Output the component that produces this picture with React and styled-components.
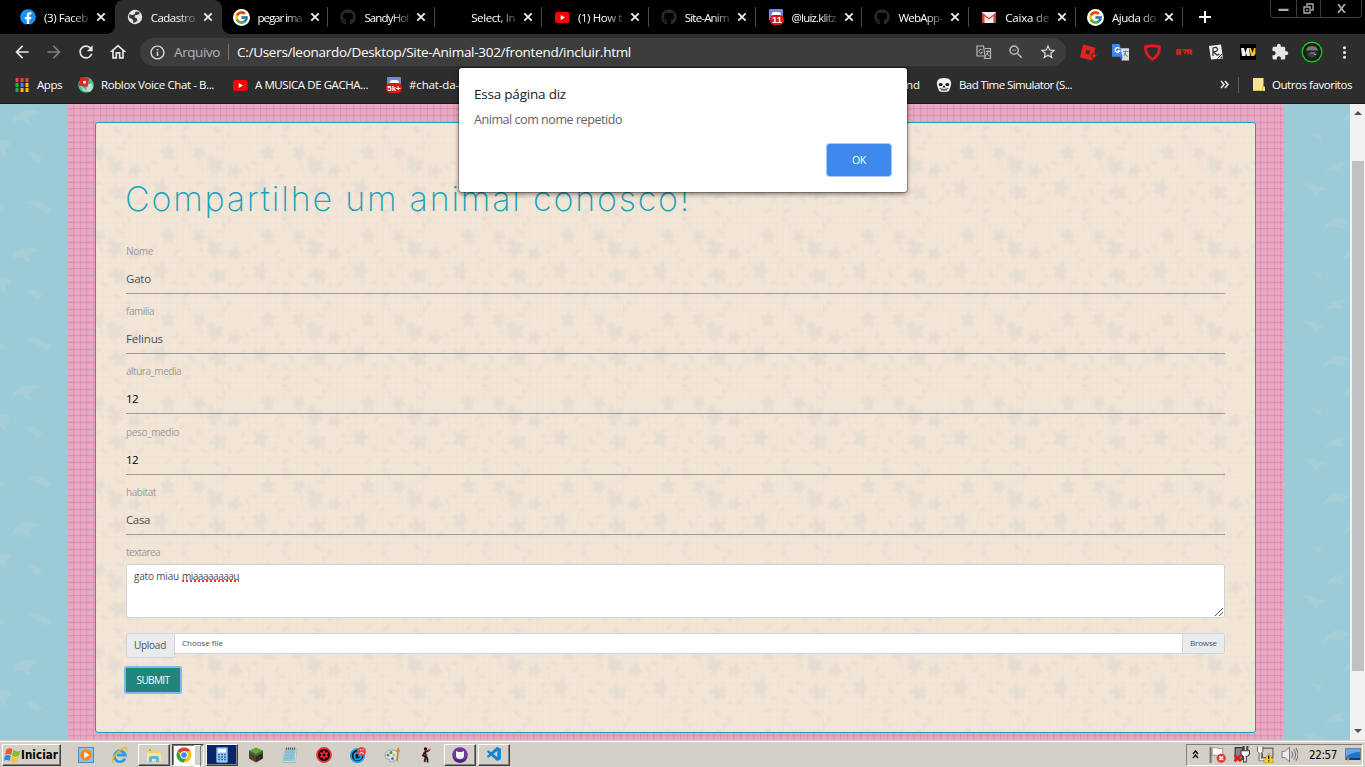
import React, { useLayoutEffect, useRef, useState } from "react";
import styled, { createGlobalStyle, css } from "styled-components";
import { FaFacebook, FaGithub } from "react-icons/fa";
import { FcGoogle } from "react-icons/fc";
import { VscVscode } from "react-icons/vsc";
import {
  MdArrowBack, MdArrowForward, MdRefresh, MdOutlineHome, MdInfoOutline,
  MdStarBorder, MdZoomOut, MdExtension, MdMoreVert,
} from "react-icons/md";

const Global = createGlobalStyle`
  * { box-sizing: border-box; }
  body { margin: 0; overflow: hidden; font-family: "Open Sans", "Noto Sans", sans-serif; }
  svg { display: block; flex: none; }
`;

/* ---------- text fitted to a column width by tracking ---------- */
const TextSpan = styled.span`
  display: block;
  width: max-content;
  flex: none;
  white-space: pre;
  font-size: ${(p) => p.$size}px;
  line-height: ${(p) => Math.ceil(p.$size * 1.4)}px;
  color: ${(p) => p.$color || "inherit"};
  ${(p) => p.$misspelt && css`
    text-decoration: underline dotted #f33 2px;
    text-decoration-skip-ink: none;
    text-underline-offset: 1px;
  `}
`;
function Text({ w, size = 12, color, misspelt, children }) {
  const ref = useRef(null);
  const [spacing, setSpacing] = useState(0);
  useLayoutEffect(() => {
    const natural = ref.current.getBoundingClientRect().width;
    setSpacing((w - natural) / children.length);
  }, [w, children]);
  return (
    <TextSpan ref={ref} $size={size} $color={color} $misspelt={misspelt} style={{ letterSpacing: spacing }}>
      {children}
    </TextSpan>
  );
}

/* ---------- frame ---------- */
const Screen = styled.div`
  position: relative;
  width: 1365px;
  height: 767px;
  display: flex;
  flex-direction: column;
  overflow: hidden;
  background: #2d2d2d;
`;

/* ---------- tab strip ---------- */
const TabStrip = styled.div`
  height: 34px;
  flex: none;
  display: flex;
  padding-left: 8px;
  background: #000;
`;
const TabItem = styled.div`
  position: relative;
  width: 106.8px;
  height: 34px;
  flex: none;
  display: flex;
  align-items: center;
  padding-left: 12px;
  color: #fff;
  background: ${(p) => (p.$active ? "#2d2d2d" : "transparent")};
  border-radius: 8px 8px 0 0;
  &::after {
    content: "";
    display: ${(p) => (p.$divider ? "block" : "none")};
    position: absolute;
    right: 0;
    top: 7px;
    width: 1px;
    height: 20px;
    background: #4a4a4a;
  }
`;
const TabFoot = styled.i`
  position: absolute;
  bottom: 0;
  ${(p) => p.$side}: -8px;
  width: 8px;
  height: 8px;
  background: radial-gradient(circle at ${(p) => (p.$side === "left" ? "0 0" : "100% 0")}, transparent 7.5px, #2d2d2d 8px);
`;
const IconSlot = styled.div`
  width: ${(p) => p.$w || 16}px;
  height: ${(p) => p.$h || 16}px;
  flex: none;
  display: flex;
  align-items: center;
  justify-content: center;
  color: #e4e4e4;
`;
const TabTitle = styled.div`
  width: 45px;
  margin: 0 7px 0 8px;
  mask-image: linear-gradient(90deg, #000 60%, rgba(0, 0, 0, 0.2) 100%);
`;
const NewTab = styled.div`
  width: 44px;
  display: flex;
  align-items: center;
  justify-content: center;
`;
const WindowButtons = styled.div`
  display: flex;
  width: 92px;
  height: 18px;
  margin-left: auto;
  margin-right: 3px;
  border: 1px solid #3d3d3d;
  border-top: 0;
  border-radius: 0 0 4px 4px;
`;
const WindowButton = styled.div`
  width: ${(p) => p.$w}px;
  display: flex;
  align-items: center;
  justify-content: center;
  & + & { border-left: 1px solid #3d3d3d; }
`;

/* ---------- navigation bar ---------- */
const NavBar = styled.div`
  height: 35px;
  flex: none;
  display: flex;
  align-items: center;
  padding: 1px 5px 0 6px;
`;
const NavButton = styled.div`
  width: 32px;
  height: 32px;
  display: flex;
  flex: none;
  align-items: center;
  justify-content: center;
  color: ${(p) => (p.$dim ? "#7c7c7c" : "#e6e6e6")};
`;
const AddressBar = styled.div`
  width: 926px;
  height: 28px;
  margin: 0 6px;
  display: flex;
  flex: none;
  align-items: center;
  padding: 0 2px 0 9px;
  border-radius: 14px;
  background: #3d3d3d;
  color: #fff;
`;
const AddressRule = styled.i`
  width: 1px;
  height: 16px;
  margin: 0 8px 0 8px;
  background: #777;
`;
const AddressActions = styled.div`
  display: flex;
  margin-left: auto;
`;
const Scheme = styled.div`
  display: flex;
  margin-left: 8px;
`;

/* ---------- bookmarks ---------- */
const BookmarkBar = styled.div`
  height: 35px;
  flex: none;
  display: flex;
  align-items: center;
  padding: 0 13px 3px 14px;
  color: #fff;
  border-bottom: 1px solid #1c1b1c;
`;
const Bookmark = styled.div`
  display: flex;
  align-items: center;
  gap: 7px;
  margin-right: ${(p) => p.$after}px;
`;
const Covered = styled.div`
  display: flex;
  justify-content: flex-end;
  width: 461px;
  margin-right: 16px;
`;
const BookmarkEnd = styled.div`
  margin-left: auto;
  display: flex;
  align-items: center;
`;
const BarRule = styled.i`
  width: 1px;
  height: 16px;
  margin: 0 12px 0 9px;
  background: #5a5a5a;
`;

/* ---------- web page ---------- */
const Viewport = styled.div`
  height: 636px;
  flex: none;
  display: flex;
`;
const Sky = styled.div`
  position: relative;
  width: ${(p) => p.$w}px;
  background: #9bcbd7;
`;
const Fill = styled.svg`
  position: absolute;
  inset: 0;
  width: 100%;
  height: 100%;
`;
const Gingham = styled.div`
  width: 1215px;
  padding: 18px 27px 0;
  background-color: #eba8c2;
  background-image:
    repeating-linear-gradient(180deg, transparent 0 3.6px, rgba(130, 70, 110, 0.05) 3.6px 4.4px, rgba(130, 70, 110, 0.18) 4.4px 5.4px, rgba(130, 70, 110, 0.04) 5.4px 6.67px),
    repeating-linear-gradient(90deg, transparent 0 5px, rgba(120, 60, 110, 0.13) 5px 6px, rgba(120, 60, 110, 0.03) 6px 6.67px);
`;
const Card = styled.div`
  position: relative;
  width: 1161px;
  height: 611px;
  border: 1px solid #17a2b8;
  border-radius: 3px;
  overflow: hidden;
  background: #f3e6d6;
`;
const Form = styled.div`
  position: relative;
  padding: 52px 30px 0;
  display: flex;
  flex-direction: column;
`;
const Title = styled.h1`
  margin: 0 0 0 -1px;
  height: 69px;
  font-family: Inter, "Open Sans", sans-serif;
  font-weight: 200;
  color: #17a2b8;
`;
const Field = styled.div`
  height: 60.2px;
  display: flex;
  flex-direction: column;
  gap: 12px;
`;
const FieldInput = styled.div`
  height: 24px;
  border-bottom: 1px solid #999b9c;
`;
const TextArea = styled.div`
  position: relative;
  height: 54px;
  margin-top: 5px;
  padding: 4px 7px;
  display: flex;
  align-items: flex-start;
  gap: 3px;
  border: 1px solid #ced4da;
  border-radius: 3px;
  background: #fff;
`;
const Grip = styled.svg`
  position: absolute;
  right: 1px;
  bottom: 1px;
`;
const UploadRow = styled.div`
  display: flex;
  align-items: flex-start;
  margin-top: 15px;
`;
const UploadTag = styled.div`
  width: 49px;
  height: 25px;
  display: flex;
  align-items: center;
  padding-left: 7px;
  border: 1px solid #ced4da;
  border-radius: 3px 0 0 3px;
  background: #e9ecef;
`;
const FileBox = styled.div`
  flex: 1;
  height: 21px;
  display: flex;
  align-items: center;
  justify-content: space-between;
  padding-left: 7px;
  border: 1px solid #ced4da;
  border-left: 0;
  border-radius: 0 3px 3px 0;
  background: #fff;
`;
const Browse = styled.div`
  width: 42px;
  height: 19px;
  display: flex;
  align-items: center;
  padding-left: 7px;
  border-left: 1px solid #ced4da;
  background: #e9ecef;
`;
const Submit = styled.div`
  width: 54px;
  height: 24px;
  margin: 10px 0 0;
  display: flex;
  align-items: center;
  justify-content: center;
  background: #20857a;
  border-radius: 1px;
  box-shadow: 0 0 0 2px #85b5ea;
`;
const ScrollBar = styled.div`
  width: 15px;
  display: flex;
  flex-direction: column;
  align-items: center;
  justify-content: space-between;
  padding: 7px 0 7px;
  background: #f1f1f1;
`;
const Thumb = styled.div`
  width: 12px;
  height: 510px;
  margin-top: -12px;
  margin-left: 1px;
  background: #c1c1c1;
`;

/* ---------- alert ---------- */
const Dialog = styled.div`
  position: absolute;
  left: 459px;
  top: 68px;
  width: 448px;
  height: 124px;
  display: flex;
  flex-direction: column;
  padding: 17px 16px 16px 15px;
  border-radius: 3px;
  background: #fff;
  box-shadow: 0 0 0 1px rgba(0, 0, 0, 0.25), 0 2px 5px rgba(0, 0, 0, 0.5);
`;
const DialogBody = styled.div`
  margin-top: 7px;
`;
const DialogButton = styled.div`
  width: 64px;
  height: 32px;
  margin-top: auto;
  align-self: flex-end;
  display: flex;
  align-items: center;
  justify-content: center;
  border-radius: 3px;
  background: #3f88ec;
  box-shadow: 0 0 0 1px #a5c8f7;
`;

/* ---------- taskbar ---------- */
const TaskBar = styled.div`
  height: 27px;
  flex: none;
  display: flex;
  align-items: center;
  padding: 2px 2px 0;
  background: #d4d0c8;
  box-shadow: inset 0 1px #d4d0c8, inset 0 2px #fff;
`;
const bevel = css`
  border: 1px solid;
  border-color: #fff #404040 #404040 #fff;
  box-shadow: inset -1px -1px #808080;
`;
const StartButton = styled.div`
  width: 59px;
  height: 22px;
  display: flex;
  align-items: center;
  padding: 1px 0 0 1px;
  font-family: "DejaVu Sans Condensed", "DejaVu Sans", sans-serif;
  font-weight: 700;
  ${bevel}
`;
const Tasks = styled.div`
  display: flex;
  margin-left: 9px;
`;
const TaskSlot = styled.div`
  position: relative;
  width: 32px;
  height: 22px;
  margin-right: 2px;
  display: flex;
  align-items: center;
  justify-content: center;
  ${(p) => p.$raised && bevel}
  ${(p) => p.$navy && css`background: #0a246a;`}
  ${(p) => p.$pressed && css`
    justify-content: flex-start;
    border: 1px solid;
    border-color: #404040 #fff #fff #404040;
    background: linear-gradient(90deg, #fff 0 21px, #d4d0c8 21px);
    box-shadow: inset 1px 1px #808080;
    padding-left: 3px;
    &::after {
      content: "";
      position: absolute;
      right: 2px;
      top: 0;
      width: 5px;
      height: 20px;
      border: 1px solid #fff;
      border-right-color: #808080;
    }
  `}
`;
const Tray = styled.div`
  width: 177px;
  height: 22px;
  margin-left: auto;
  display: flex;
  align-items: center;
  padding-left: 4px;
  border: 1px solid;
  border-color: #808080 #fff #fff #808080;
  font-family: "DejaVu Sans Condensed", sans-serif;
`;
const TrayIcon = styled.div`
  width: ${(p) => p.$w}px;
  display: flex;
  flex: none;
  justify-content: center;
`;
const Clock = styled.div`
  width: 50px;
  flex: none;
  padding: 1px 0 0 14px;
`;

/* ---------- drawings ---------- */
const Svg = ({ s = 16, w, h, v = "0 0 16 16", children }) => (
  <svg width={w || s} height={h || s} viewBox={v} fill="none">{children}</svg>
);
const Close = () => (
  <Svg s={10} v="0 0 10 10"><path d="M1.3 1.3L8.7 8.7M8.7 1.3L1.3 8.7" stroke="#f2f2f2" strokeWidth="1.8" /></Svg>
);
const YouTube = () => (
  <Svg><rect x="1" y="3" width="14.5" height="11" rx="2.5" fill="#f00" /><path d="M6.7 6v5l4.3-2.5z" fill="#fff" /></Svg>
);
const badgeFont = { fontFamily: "Liberation Sans, sans-serif", fontWeight: 700 };
const Discord = ({ label }) => (
  <Svg>
    <rect x="1" width="14" height="11" rx="1" fill="#7189d8" />
    <path d="M3.5 6Q4 3 6 3h4.500q2 0 2.500 3z" fill="#fff" />
    <rect x={label.length > 2 ? 0 : 2} y="6" width={label.length > 2 ? 16 : 14} height="10" rx="4.500" fill="#e01414" />
    <text x={label.length > 2 ? 8 : 9} y="14" fontSize={label.length > 2 ? 8 : 9.500} textAnchor="middle" fill="#fff" {...badgeFont}>{label}</text>
  </Svg>
);
const Globe = () => (
  <Svg><circle cx="8" cy="8" r="7.200" fill="#e4e4e4" /><path d="M2.500 5Q5 6.500 7 5.500t1-2.500q3-1.500 5 1-1.500 2.500-4 2-2 .5-1 2.500 2.500.5 2.500 2.500-1 2.500-4 3l-.5-3Q4 9 2 8.500z" fill="#3a3a3a" /></Svg>
);
const Gmail = () => (
  <Svg><rect x="1" y="3" width="14" height="11" fill="#eee" /><path d="M1 14V3.500L8 9l7-5.500V14h-2.500V7L8 10.500 3.500 7v7z" fill="#d93c30" /></Svg>
);
const Apps = () => (
  <Svg s={14} v="0 0 14 14">
    {["#e8453c", "#e8453c", "#e8453c", "#2fa653", "#3b83f3", "#f6b916", "#2fa653", "#f6b916", "#f6b916"].map((c, i) => (
      <rect key={i} x={(i % 3) * 5 + 0.5} y={Math.floor(i / 3) * 5} width="3" height="4" fill={c} />
    ))}
  </Svg>
);
const RobloxBall = () => (
  <Svg>
    <circle cx="8" cy="8" r="7.800" fill="#55b780" /><path d="M9 8l5-2 1 5-3 4-4-1z" fill="#b9dfd0" />
    <path d="M2 8l5 4 2 3-4-1z" fill="#9bd3e8" /><path d="M2.500 0L11 1.500 9.500 10 1 8.500z" fill="#dc2620" /><path d="M5.500 3.800l2.600.5-.5 2.500-2.600-.5z" fill="#fff" />
  </Svg>
);
const Skull = () => (
  <Svg>
    <path d="M3 2Q8 0 13 2q3 2.500 2 6l-1 3-1 3-3 1H6l-3-1-1-3-1-3Q0 4.500 3 2z" fill="#f2f2f2" />
    <ellipse cx="4.700" cy="7.600" rx="2" ry="1.700" fill="#1c1c1c" /><ellipse cx="11.300" cy="7.600" rx="2" ry="1.700" fill="#1c1c1c" />
    <path d="M7 10.300l1-1.500 1 1.500zM3.500 11.500q4.500 2 9 0M6 12v2M8 12.500v2M10 12v2" stroke="#222" strokeWidth=".8" />
  </Svg>
);
const Folder = () => (
  <Svg w={13} h={15} v="0 0 13 15"><path d="M1 1h10.500v9H13v4H1z" fill="#fde293" /><path d="M1 13.500h11.500M10.500 14v-4H13" stroke="#e5bd3d" /></Svg>
);
const TranslateGrey = () => (
  <Svg>
    <path d="M1 2h6.500L9 12H1zM9 4.500h5.500v10H8.500l1-2.500" stroke="#b8b8b8" strokeWidth="1.200" />
    <path d="M6.500 6A2 2 0 1 0 6.500 8.500H5M10 7.500h4M12 6v1.500q-.5 3-2 4M10.700 9l3 3.500" stroke="#b8b8b8" />
  </Svg>
);
const TranslateBlue = () => (
  <Svg s={17}>
    <path d="M7 4h9v11.500H9z" fill="#ddd" /><path d="M0 0h7l3 12H0z" fill="#4387f2" /><path d="M7 12h3l-1 3.500z" fill="#2b5cb8" />
    <path d="M7 4.300A2.200 2.200 0 1 0 7.200 6.500H5" stroke="#fff" strokeWidth="1.200" /><path d="M10.500 7h5M13 6v1q-.5 3-2 4M11.700 8.500l3 3.500" stroke="#6c8799" />
  </Svg>
);
const RobloxPlus = () => (
  <Svg s={17}><path d="M3 .5l11.500 3-1 4-1 6-2 2L0 12.500z" fill="#e2231a" /><path d="M6 5.500l3.500.8-.8 3.500-3.500-.8z" fill="#2d2d2d" /><path d="M13 8.500v5M10.500 11h5.500" stroke="#2d2d2d" strokeWidth="3" /><path d="M13 9v4M11 11h4.500" stroke="#e2231a" strokeWidth="1.700" /></Svg>
);
const Shield = () => (
  <Svg s={17}><path d="M1.500 2.500Q5 2 8 1.500q3 .5 6.500 1 .5 8-6.500 12Q1 10.500 1.500 2.500z" stroke="#eb1626" strokeWidth="2.600" /></Svg>
);
const Btr = () => (
  <Svg w={17} h={6} v="0 0 17 6"><path d="M1 1h3.500v4H1zM1 3h3.500M6.500 1h4L8.500 5M12 5.500V1h3.500v2H12M13.500 3.500l2.500 2" stroke="#df2819" strokeWidth="1.500" /></Svg>
);
const WhiteTile = () => (
  <Svg><path d="M1 2l12-1.500 2 14L3 15.500z" fill="#f2f2f2" /><path d="M5 12V4q4-1.500 4.500 1T5.500 8l4 3.500" stroke="#333" strokeWidth="1.300" /><path d="M9.500 14.500l5-5" stroke="#333" /><circle cx="10.500" cy="10.500" r="1" fill="#333" /><circle cx="13.500" cy="13.500" r="1" fill="#333" /></Svg>
);
const WTile = () => (
  <Svg><rect width="16" height="16" fill="#000" /><path d="M1 4h3l1.500 5L7 4h2l1 8H7L6 9l-.5 3H2z" fill="#eee" /><path d="M9 4h2l1.500 5L14 4h1.500v6L14 12h-3z" fill="#f2c231" /></Svg>
);
const Avatar = () => (
  <Svg s={22} v="0 0 22 22"><circle cx="11" cy="11" r="9.800" fill="#151515" stroke="#17c917" strokeWidth="1.400" /><circle cx="11" cy="11" r="7.600" fill="#222" /><path d="M5 9.500q1-4.500 6-4.500t6 4.500z" fill="#777" /><path d="M6 11.500h10q-1 5-5 5t-5-5z" fill="#3e3e3e" /><path d="M9 12h5M13 13.500h2" stroke="#999" /></Svg>
);
const Flag = () => (
  <Svg w={17} h={18} v="0 0 17 18">
    <path d="M2.500 3.500Q6 1 8.500 3.500L7 9Q4 7 1 9z" fill="#ea5927" /><path d="M9.500 4q3.500 2.500 7 .5L15 9.500q-3.500 2.500-7 0z" fill="#84bc35" />
    <path d="M.8 10q3-2 6 0L5.500 15q-3-2-5.500 0z" fill="#2c8be0" /><path d="M7.800 10.500q3.500 2.500 7 0L13.500 15q-3.500 2.500-7 .5z" fill="#f7c52c" />
  </Svg>
);
const Player = () => (
  <Svg><rect x=".5" y=".5" width="15" height="15" fill="#8fc3ee" stroke="#4a8ac6" /><circle cx="8" cy="8" r="5.800" fill="#f58a16" /><path d="M6.300 4.500v7l5-3.500z" fill="#fff" /></Svg>
);
const Explorer = () => (
  <Svg><path d="M13 11.500A5.500 5.500 0 1 1 13.300 8H5" stroke="#359be2" strokeWidth="2.800" /><path d="M2 14.500Q-.5 16 1 11.500 5 4 12 1q4-1 2.500 3" stroke="#f0b81c" strokeWidth="1.500" /></Svg>
);
const Library = () => (
  <Svg><path d="M1 2h6l1 2h6v10H1z" fill="#f0cf6d" /><path d="M1 6h14v8H1z" fill="#fae79f" /><path d="M3 15v-4q0-2 2-2h6q2 0 2 2v4h-3v-3H6v3z" fill="#5eb7e7" /><path d="M3 3h2" stroke="#3b9e43" /></Svg>
);
const Chrome = () => (
  <Svg><circle cx="8" cy="8" r="7.500" fill="#f7c51e" /><path d="M8 8L1.500 4.300A7.500 7.500 0 0 1 14.500 4.300H8z" fill="#de4134" /><path d="M1.500 4.300A7.500 7.500 0 0 0 7.500 15.500L11 10 5 9z" fill="#2da252" /><circle cx="8" cy="8" r="3.700" fill="#fff" /><circle cx="8" cy="8" r="2.800" fill="#4285f4" /></Svg>
);
const Calc = () => (
  <Svg><rect x="2.500" y=".5" width="11" height="15" rx="1" fill="#9cc8ea" stroke="#5c94c5" /><rect x="4" y="2" width="8" height="3.500" fill="#eef8ff" />{[7, 9.500, 12].map((y) => <path key={y} d={`M4 ${y + 0.5}h2M7 ${y + 0.5}h2M10 ${y + 0.5}h2`} stroke="#2f6ea9" strokeWidth="1.300" />)}</Svg>
);
const Block = () => (
  <Svg><path d="M8 .5l7 3-7 3.500-7-3.500z" fill="#69a63c" /><path d="M1 3.500L8 7v8.500l-7-4z" fill="#55402f" /><path d="M15 3.500L8 7v8.500l7-4z" fill="#3a2a20" /><path d="M1 3.500L8 7l7-3.500v2l-2 1.500-2 .5-2 2-2-1-3-1-2-1.500z" fill="#3f6f27" /></Svg>
);
const Notepad = () => (
  <Svg><path d="M3.500 2h11.500l-1.500 13.500H1z" fill="#f1f3f4" stroke="#999" strokeWidth=".6" /><path d="M3.500 2h10.500L12.500 14.500H1z" fill="#8fc6d4" /><path d="M4 1.500h10" stroke="#444" strokeDasharray="1 1" strokeWidth="2" /><path d="M4 5h8M3.500 8h8M3 11h8" stroke="#77afbd" strokeWidth=".7" /></Svg>
);
const RedGear = () => (
  <Svg><circle cx="8" cy="8" r="6.900" fill="#0c0808" stroke="#f42b32" strokeWidth="2" /><circle cx="8" cy="8" r="2.200" stroke="#f42b32" strokeWidth="1.600" /><path d="M8 3.500v2M8 10.500v2M4.200 5.800l1.600 1M10.200 9.200l1.600 1M4.200 10.200l1.600-1M10.200 6.800l1.600-1" stroke="#f42b32" strokeWidth="1.700" /></Svg>
);
const BlueG = () => (
  <Svg><circle cx="7.500" cy="8.500" r="6.700" fill="#101b2b" stroke="#189ee9" strokeWidth="1.800" /><path d="M10 5.500Q4 5 4.500 9.500 5 13 8 12.500q3.500-.5 3-4H8" stroke="#189ee9" strokeWidth="2" /><circle cx="11.500" cy="4.500" r="4.500" fill="#e74646" /><path d="M9.500 6.500q2-2 4 0M10 3h1M12.500 3h1" stroke="#fff" /></Svg>
);
const Palette = () => (
  <Svg><path d="M1 9q0-6 7-6 7 .5 6.500 6-1 5-7 5.500-2 0-2-1.500T3.500 12Q1 12 1 9z" fill="#d4e8f0" stroke="#84adc0" /><circle cx="4" cy="8" r="1.500" fill="#e24a37" /><circle cx="7" cy="5.500" r="1.500" fill="#3f9d45" /><circle cx="10" cy="8" r="1.500" fill="#f0bd2c" /><circle cx="8.500" cy="11.500" r="1.500" fill="#367dd4" /><path d="M14.500 0l1.500 4-2 3v8l-2-2 1-7-.5-3z" fill="#db892d" /></Svg>
);
const Fighter = () => (
  <Svg><circle cx="7.500" cy="2" r="1.700" fill="#241010" /><path d="M6.500 4.500h2.500l2.500-1.500M7.500 4.500v5.500L6.500 15M8 9l1.500 3v3.500M6.500 5.500L5 8.500l2 1" stroke="#261010" strokeWidth="1.700" /><path d="M9 4.500l3.500-2.500M6.500 7.500l3 .5M7 12l2 .5" stroke="#b42020" /></Svg>
);
const GitDesktop = () => (
  <Svg><circle cx="8" cy="8" r="7.800" fill="#6f36a0" /><path d="M1 11q7 4 14 0-2 4.500-7 4.800-5-.3-7-4.800z" fill="#4b2572" /><path d="M4 4l2.500 1h3L12 4v4.500Q12 12 8 12T4 8.500z" fill="#f2f2f2" /></Svg>
);
const AlertFlag = () => (
  <Svg s={17}><path d="M1.500 1v15" stroke="#777" strokeWidth="2" /><path d="M3 2q3-1 5 0t5 0v7q-3 1-5 0t-5 0z" fill="#fff" stroke="#888" strokeWidth=".8" /><circle cx="11.500" cy="11.500" r="4.300" fill="#e13a32" /><path d="M9.800 9.800l3.400 3.400M13.200 9.800l-3.400 3.400" stroke="#fff" strokeWidth="1.500" /></Svg>
);
const Power = () => (
  <Svg s={17}><path d="M2 1.500h7v11H2z" fill="#888" stroke="#333" /><path d="M10 0v4M13.500 0v4" stroke="#444" strokeWidth="2" /><path d="M7.500 4.500h8v3q-1 2.500-3 2.500v5h-2.500v-5q-2-1-2.500-3z" fill="#fff" stroke="#333" /><path d="M1.500 8.500l6 6M7.500 8.500l-6 6" stroke="#e31818" strokeWidth="2.400" /></Svg>
);
const Network = () => (
  <Svg s={17}><rect x="5" y="2" width="10" height="9" fill="#ccc" stroke="#555" /><path d="M1.500 1v4h3V1M3 5v9h6" stroke="#fff" strokeWidth="2" /><path d="M.5 .5V5L2 6.500V14h5M5.500.5V5L4 6.500V12" stroke="#444" strokeWidth=".8" /><path d="M11 6.500l5 9H6z" fill="#f8d91c" stroke="#a48c00" strokeWidth=".5" /><path d="M11 9v3.500M11 13.500v1" stroke="#111" strokeWidth="1.200" /></Svg>
);
const Speaker = () => (
  <Svg s={17}><path d="M1 5h3l4-4v14l-4-4H1z" fill="#eee" stroke="#666" strokeWidth=".8" /><path d="M10 5q2 3 0 6M12 3q3.500 5 0 10M14 2q4 6 0 12" stroke="#777" /></Svg>
);
const DesktopIcon = () => (
  <Svg w={16} h={13} v="0 0 16 13"><rect x=".5" y=".5" width="15" height="11" fill="#2671c9" stroke="#73808e" /><path d="M1 1h14v3Q6 4 1 9z" fill="#63a8ed" /><path d="M1 11h14" stroke="#123b7a" strokeWidth="2" /><circle cx="3" cy="11" r="1.500" fill="#ed6b2c" /></Svg>
);

const BirdTile = ({ id, shapes }) => (
  <Fill>
    <defs>
      <pattern id={id} width="68" height="137.5" patternUnits="userSpaceOnUse">
        <path d={shapes} fill="#aacfd6" opacity=".75" />
      </pattern>
    </defs>
    <rect width="100%" height="100%" fill={`url(#${id})`} />
  </Fill>
);
const leftBirds =
  "M12 19L15 11 23 7 33 6 41 8.500 33 11 28 15 32 21 27 20 22 16 17 16ZM27 48L36 49 43 54 40 55 38 59 33 55ZM0 36L7 36 11 40 5 45 7 53 2 50 0 44ZM27 98L38 97 49 103 51 106 46 109 37 103ZM0 102L5 104 3 109 0 107Z";
const rightBirds =
  "M27 28L33 31 41 31 37 33 39 37 32 34ZM42 70L46 64 52 60 63 58 58 63 61 67 54 67 49 66ZM19 79L30 80 35 83 45 85 37 86 32 93 29 86ZM39 128L43 120 51 114 59 115 66 118 60 120 62 125 54 123 46 122ZM60 17L64 11 67 10 67 15ZM0 101L3 104 0 109Z";

const petals = [[0, 1.1], [65, 0.9], [140, 1.15], [205, 0.85], [290, 1]];
const Blossom = ({ x, y, r = 4.5, turn = 0 }) => (
  <g transform={`rotate(${turn} ${x} ${y})`}>
    {petals.map(([a, k]) => {
      const t = (a * Math.PI) / 180;
      return <ellipse key={a} cx={x + r * k * Math.sin(t)} cy={y - r * k * Math.cos(t)} rx={r * 0.5} ry={r * 0.66} transform={`rotate(${a} ${x + r * k * Math.sin(t)} ${y - r * k * Math.cos(t)})`} />;
    })}
    <circle cx={x} cy={y} r={r * 0.6} />
  </g>
);
const leaves = [
  [21, 7, 30], [29, 19, -40], [33, 13, 60], [24, 25, 20], [88, 13, 15], [93, 19, 50], [90, 5, -40], [51, 45, 60],
  [58, 40, 30], [81, 46, -50], [86, 53, 20], [51, 70, 20], [44, 78, -50], [34, 79, 60], [3, 60, -20], [8, 78, 40],
  [78, 76, -40], [90, 78, 30], [95, 68, 50], [5, 43, 60], [47, 62, -30], [73, 4, -30],
];
const FlowerTile = () => (
  <Fill>
    <defs>
      <filter id="print"><feGaussianBlur stdDeviation=".8" /></filter>
      <pattern id="flowers" width="100" height="83.33" patternUnits="userSpaceOnUse">
        <g fill="#b8bdc8" opacity=".2" filter="url(#print)">
          <Blossom x={71.7} y={30.3} r={4.8} /><Blossom x={2.5} y={30.3} turn={30} /><Blossom x={102.5} y={30.3} turn={30} />
          <Blossom x={19} y={43} r={5.4} turn={50} /><Blossom x={15} y={37} r={3.2} /><Blossom x={38.5} y={47.5} turn={95} />
          <Blossom x={64} y={65} r={5.4} turn={20} /><Blossom x={22} y={69} r={5.4} turn={130} />
          {leaves.map(([x, y, a], i) => <ellipse key={i} cx={x} cy={y} rx={i % 3 ? 3 : 4.4} ry={i % 2 ? 1.3 : 1.8} transform={`rotate(${a} ${x} ${y})`} />)}
        </g>
        <path d="M21 8q8 4 7 17M89 8q3 6-2 15M51 44q4 4 1 12M86 53q-4 4-3 11" stroke="#d0d2d6" opacity=".22" fill="none" />
      </pattern>
      <pattern id="weave" width="6.67" height="6.67" patternUnits="userSpaceOnUse">
        <path d="M0 .5H7M.5 0V7" stroke="#dccbc0" opacity=".14" />
      </pattern>
    </defs>
    <rect width="100%" height="100%" fill="url(#flowers)" />
    <rect width="100%" height="100%" fill="url(#weave)" />
  </Fill>
);

const gh = <FaGithub size={16} color="#24292e" />;
const tabs = [
  { title: "(3) Faceb", icon: <FaFacebook size={16} color="#1693f5" style={{ background: "radial-gradient(#fff 60%, transparent 62%)" }} /> },
  { title: "Cadastro", icon: <Globe />, active: true },
  { title: "pegar ima", icon: <FcGoogle size={17} style={{ background: "#fff", borderRadius: 9, padding: 1 }} />, divider: true },
  { title: "SandyHol", icon: gh, divider: true },
  { title: "Select, In", icon: null, divider: true },
  { title: "(1) How t", icon: <YouTube />, divider: true },
  { title: "Site-Anim", icon: gh, divider: true },
  { title: "@luiz.klitz", icon: <Discord label="11" />, divider: true },
  { title: "WebApp-", icon: gh, divider: true },
  { title: "Caixa de", icon: <Gmail />, divider: true },
  { title: "Ajuda do", icon: <FcGoogle size={17} style={{ background: "#fff", borderRadius: 9, padding: 1 }} />, divider: true },
];
const fields = [
  { label: "Nome", lw: 27, value: "Gato", vw: 25 },
  { label: "familia", lw: 28, value: "Felinus", vw: 37 },
  { label: "altura_media", lw: 55, value: "12", vw: 12, ink: "#000" },
  { label: "peso_medio", lw: 53, value: "12", vw: 12, ink: "#000" },
  { label: "habitat", lw: 30, value: "Casa", vw: 24 },
];
const extensions = [<RobloxPlus />, <TranslateBlue />, <Shield />, <Btr />, <WhiteTile />, <WTile />, <MdExtension size={18} />, <Avatar />, <MdMoreVert size={19} />];
const tasks = [
  { icon: <Player /> }, { icon: <Explorer /> }, { icon: <Library />, raised: true }, { icon: <Chrome />, pressed: true },
  { icon: <Calc />, raised: true, navy: true }, { icon: <Block /> }, { icon: <Notepad /> }, { icon: <RedGear /> }, { icon: <BlueG /> },
  { icon: <Palette /> }, { icon: <Fighter /> }, { icon: <GitDesktop />, raised: true },
  { icon: <VscVscode size={17} color="#1482d0" />, raised: true },
];

export default function App() {
  return (
    <Screen>
      <Global />
      <TabStrip>
        {tabs.map((t) => (
          <TabItem key={t.title} $active={t.active} $divider={t.divider}>
            {t.active && <><TabFoot $side="left" /><TabFoot $side="right" /></>}
            <IconSlot>{t.icon}</IconSlot>
            <TabTitle><Text w={44} size={11.5}>{t.title}</Text></TabTitle>
            <Close />
          </TabItem>
        ))}
        <NewTab><Svg s={12} v="0 0 12 12"><path d="M6 0v12M0 6h12" stroke="#fff" strokeWidth="2" /></Svg></NewTab>
        <WindowButtons>
          <WindowButton $w={25}><Svg w={11} h={4} v="0 0 11 4"><path d="M.5 3h10" stroke="#aaa" strokeWidth="2.5" /></Svg></WindowButton>
          <WindowButton $w={25}><Svg s={11} v="0 0 11 11"><path d="M4 3V1h6v6H8M1 4h6v6H1zM4 6v2" stroke="#aaa" strokeWidth="1.4" /></Svg></WindowButton>
          <WindowButton $w={41}><Svg s={9} v="0 0 9 9"><path d="M1 0l7 9M8 0L1 9" stroke="#aaa" strokeWidth="1.8" /></Svg></WindowButton>
        </WindowButtons>
      </TabStrip>

      <NavBar>
        <NavButton><MdArrowBack size={20} /></NavButton>
        <NavButton $dim><MdArrowForward size={20} /></NavButton>
        <NavButton><MdRefresh size={20} /></NavButton>
        <NavButton><MdOutlineHome size={20} /></NavButton>
        <AddressBar>
          <MdInfoOutline size={17} color="#ddd" />
          <Scheme><Text w={46} size={13.5} color="#b5b5b5">Arquivo</Text></Scheme>
          <AddressRule />
          <Text w={394} size={13.5}>C:/Users/leonardo/Desktop/Site-Animal-302/frontend/incluir.html</Text>
          <AddressActions>
            <NavButton><TranslateGrey /></NavButton>
            <NavButton><MdZoomOut size={18} color="#bbb" /></NavButton>
            <NavButton><MdStarBorder size={18} color="#ddd" /></NavButton>
          </AddressActions>
        </AddressBar>
        {extensions.map((icon, i) => <NavButton key={i}>{icon}</NavButton>)}
      </NavBar>

      <BookmarkBar>
        <Bookmark $after={16}><IconSlot $w={16}><Apps /></IconSlot><Text w={25} size={11.5}>Apps</Text></Bookmark>
        <Bookmark $after={18}><RobloxBall /><Text w={113} size={11.5}>Roblox Voice Chat - B...</Text></Bookmark>
        <Bookmark $after={18}><YouTube /><Text w={113} size={11.5}>A MUSICA DE GACHA...</Text></Bookmark>
        <Bookmark $after={0}><Discord label="5k+" /><Text w={50} size={11.5}>#chat-da-</Text></Bookmark>
        <Covered><Text w={14} size={11.5}>nd</Text></Covered>
        <Bookmark $after={0}><Skull /><Text w={113} size={11.5}>Bad Time Simulator (S...</Text></Bookmark>
        <BookmarkEnd>
          <Svg s={9} v="0 0 9 9"><path d="M1 1l3 3.500L1 8M5 1l3 3.500L5 8" stroke="#e8e8e8" strokeWidth="1.6" /></Svg>
          <BarRule />
          <Bookmark $after={0}><IconSlot $w={14}><Folder /></IconSlot><Text w={80} size={11.5}>Outros favoritos</Text></Bookmark>
        </BookmarkEnd>
      </BookmarkBar>

      <Viewport>
        <Sky $w={68}><BirdTile id="birds-left" shapes={leftBirds} /></Sky>
        <Gingham>
          <Card>
            <FlowerTile />
            <Form>
              <Title><Text w={566} size={34}>Compartilhe um animal conosco!</Text></Title>
              {fields.map((f) => (
                <Field key={f.label}>
                  <Text w={f.lw} size={10} color="#999b9c">{f.label}</Text>
                  <FieldInput><Text w={f.vw} size={11.5} color={f.ink || "#495057"}>{f.value}</Text></FieldInput>
                </Field>
              ))}
              <Text w={34} size={10} color="#999b9c">textarea</Text>
              <TextArea>
                <Text w={45} size={10} color="#495057">gato miau</Text>
                <Text w={57} size={10} color="#495057" misspelt>miaaaaaaaau</Text>
                <Grip width="8" height="8"><path d="M0 8L8 0M4 8l4-4" stroke="#555" /></Grip>
              </TextArea>
              <UploadRow>
                <UploadTag><Text w={32} size={10} color="#495057">Upload</Text></UploadTag>
                <FileBox>
                  <Text w={41} size={8} color="#495057">Choose file</Text>
                  <Browse><Text w={27} size={8} color="#495057">Browse</Text></Browse>
                </FileBox>
              </UploadRow>
              <Submit><Text w={33} size={10} color="#fff">SUBMIT</Text></Submit>
            </Form>
          </Card>
        </Gingham>
        <Sky $w={67}><BirdTile id="birds-right" shapes={rightBirds} /></Sky>
        <ScrollBar>
          <Svg w={8} h={4} v="0 0 8 4"><path d="M0 4l4-4 4 4z" fill="#505050" /></Svg>
          <Thumb />
          <Svg w={8} h={4} v="0 0 8 4"><path d="M0 0l4 4 4-4z" fill="#505050" /></Svg>
        </ScrollBar>
      </Viewport>

      <TaskBar>
        <StartButton><Flag /><Text w={37} size={11.5} color="#000">Iniciar</Text></StartButton>
        <Tasks>
          {tasks.map((t, i) => <TaskSlot key={i} $raised={t.raised} $pressed={t.pressed} $navy={t.navy}>{t.icon}</TaskSlot>)}
        </Tasks>
        <Tray>
          <TrayIcon $w={8}><Svg w={7} h={9} v="0 0 7 9"><path d="M1 4l2.500-3L6 4M1 8l2.500-3L6 8" stroke="#000" strokeWidth="1.3" /></Svg></TrayIcon>
          <TrayIcon $w={36}><AlertFlag /></TrayIcon>
          <TrayIcon $w={12}><Power /></TrayIcon>
          <TrayIcon $w={36}><Network /></TrayIcon>
          <TrayIcon $w={12}><Speaker /></TrayIcon>
          <Clock><Text w={28} size={11.5} color="#000">22:57</Text></Clock>
          <DesktopIcon />
        </Tray>
      </TaskBar>

      <Dialog>
        <Text w={92} size={13.5} color="#202124">Essa página diz</Text>
        <DialogBody><Text w={148} size={12.5} color="#5f6368">Animal com nome repetido</Text></DialogBody>
        <DialogButton><Text w={14} size={10.5} color="#fff">OK</Text></DialogButton>
      </Dialog>
    </Screen>
  );
}
